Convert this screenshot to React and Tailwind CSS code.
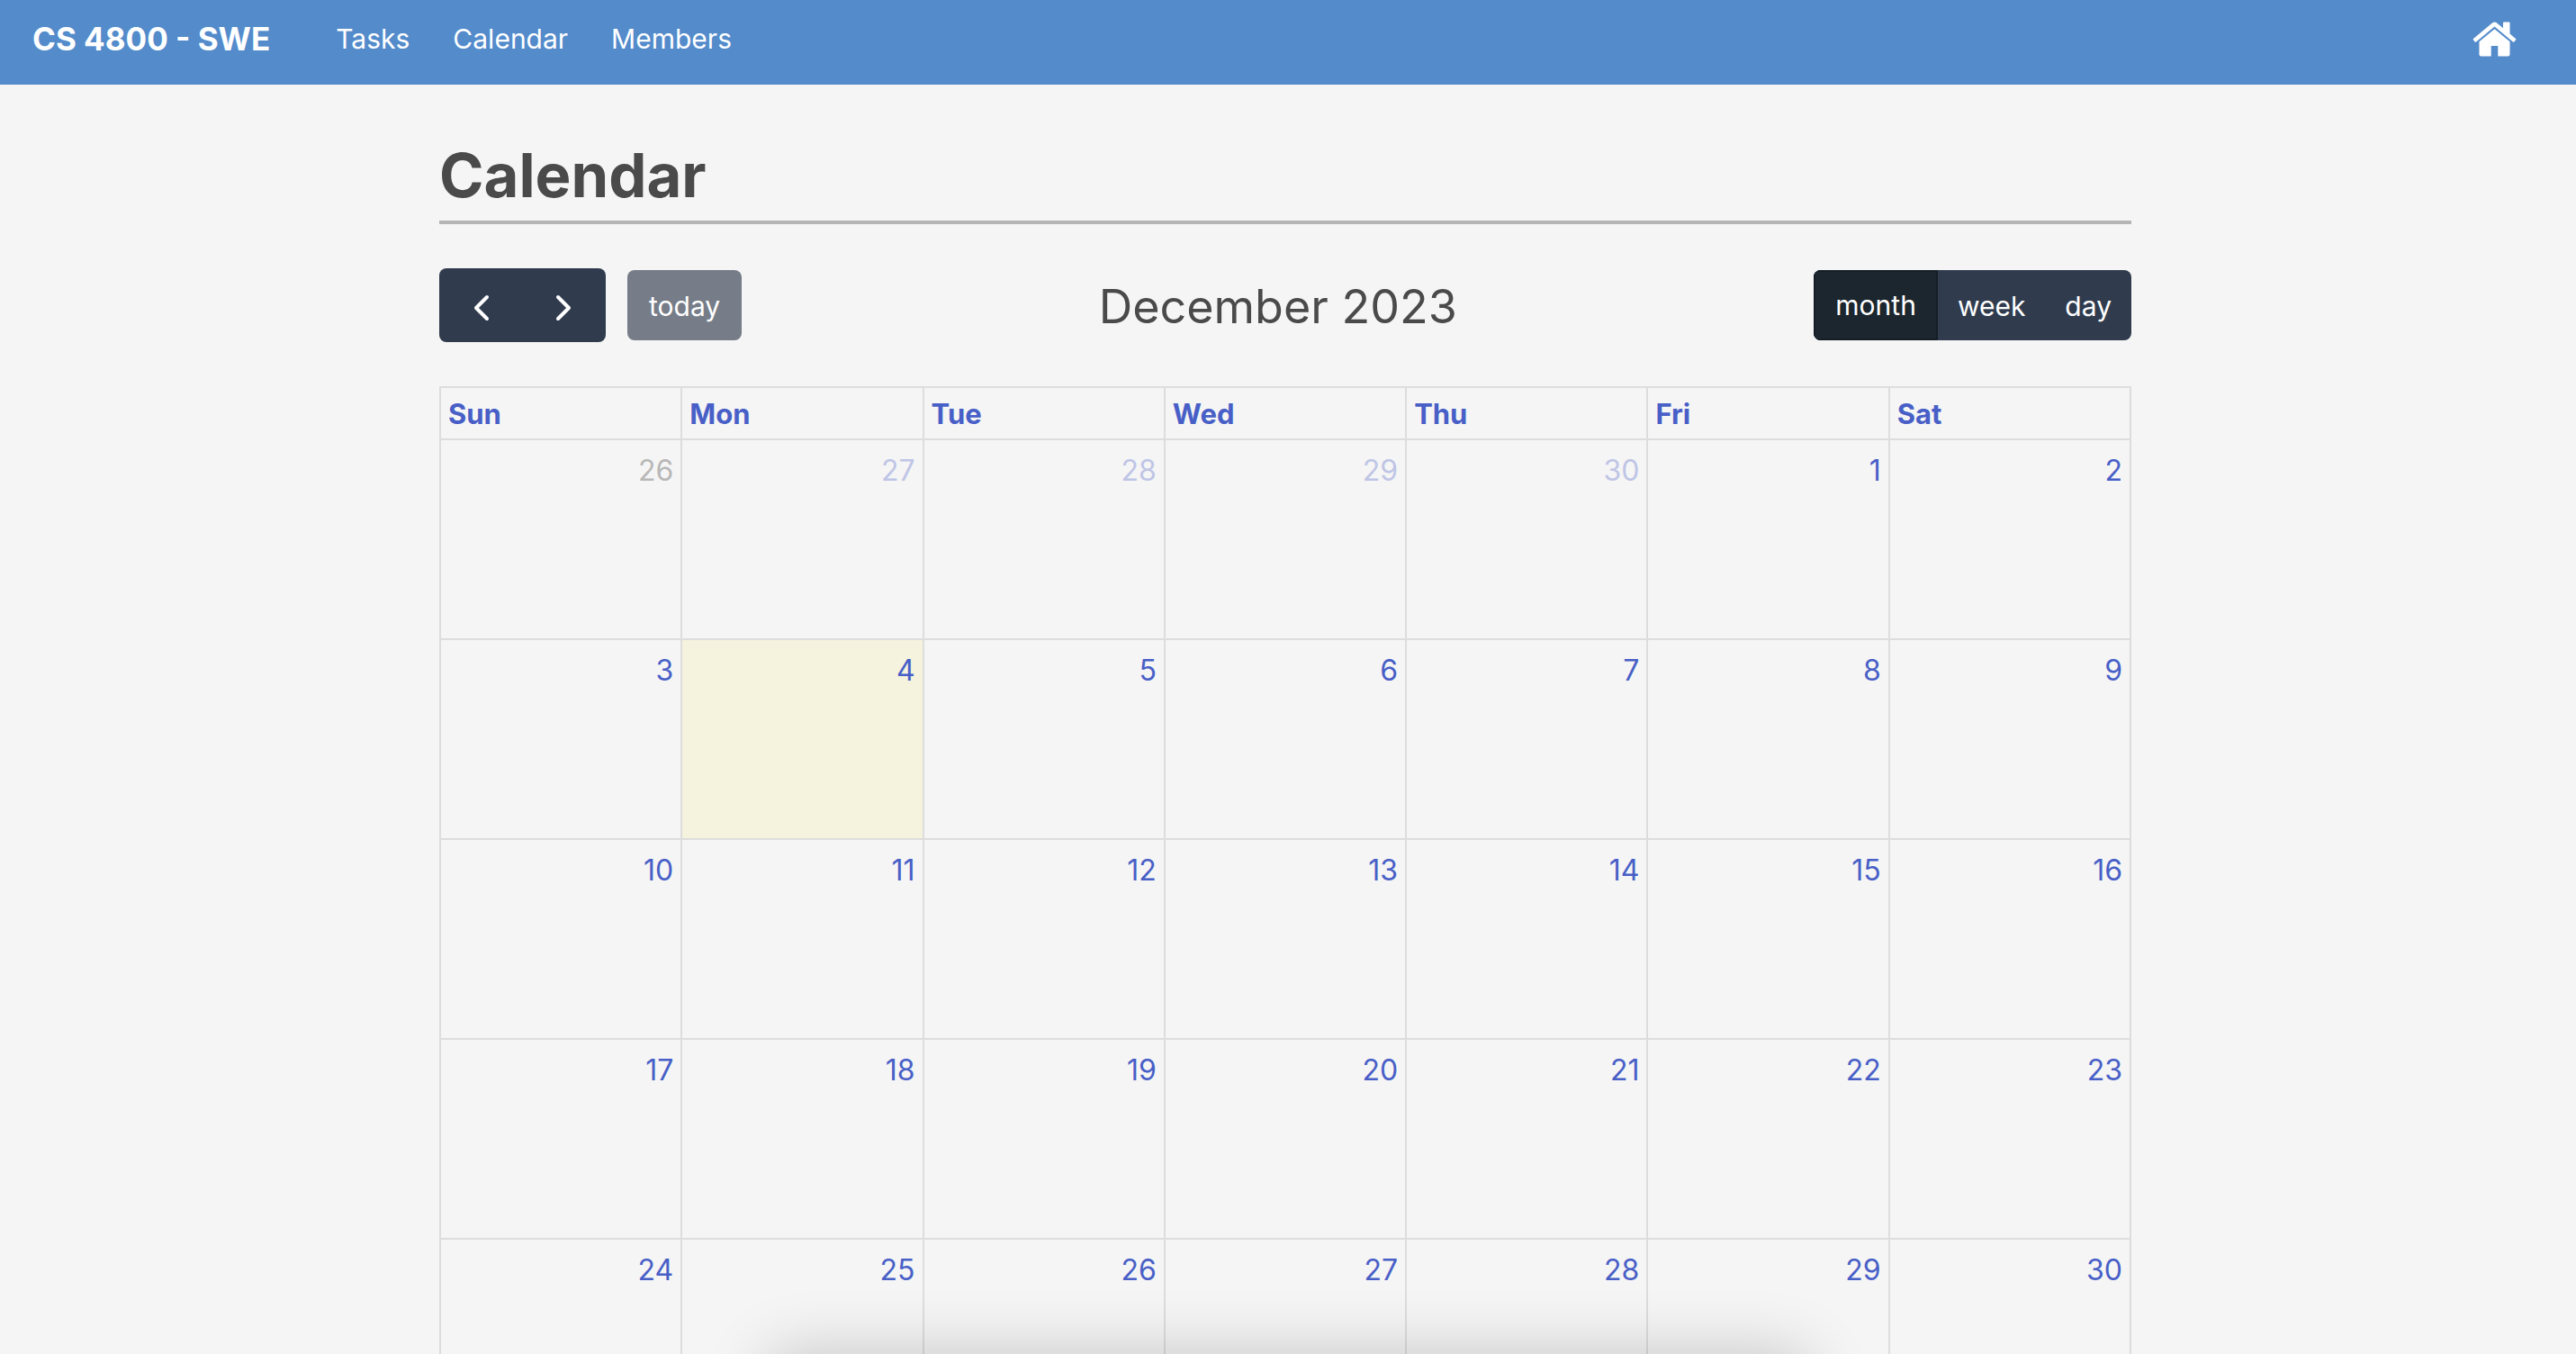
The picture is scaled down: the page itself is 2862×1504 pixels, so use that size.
import React from "react";

const DAYS = ["Sun", "Mon", "Tue", "Wed", "Thu", "Fri", "Sat"];
const WEEKS = [
  [26, 27, 28, 29, 30, 1, 2],
  [3, 4, 5, 6, 7, 8, 9],
  [10, 11, 12, 13, 14, 15, 16],
  [17, 18, 19, 20, 21, 22, 23],
  [24, 25, 26, 27, 28, 29, 30],
];

function HomeIcon() {
  return (
    <svg viewBox="0 0 1792 1792" className="size-[53px]" fill="currentColor" aria-hidden="true">
      <path d="M1472 992v480q0 26-19 45t-45 19h-384v-384h-256v384h-384q-26 0-45-19t-19-45v-480q0-1 .5-3t.5-3l575-474 575 474q1 2 1 6zm223-69l-62 74q-8 9-21 11h-3q-13 0-21-7l-692-577-692 577q-12 8-24 7-13-2-21-11l-62-74q-8-10-7-23.5t11-21.5l719-599q32-26 76-26t76 26l244 204v-195q0-14 9-23t23-9h192q14 0 23 9t9 23v408l219 182q10 8 11 21.5t-7 23.5z" />
    </svg>
  );
}

function Chevron({ d }) {
  return (
    <svg viewBox="0 0 36 36" className="size-9" fill="none" stroke="currentColor" strokeWidth="4" strokeLinecap="round" strokeLinejoin="round" aria-hidden="true">
      <path d={d} />
    </svg>
  );
}

function dayColor(week, day) {
  if (week === 0 && day === 0) return "text-[#b8b8b8]";
  if (week === 0 && day < 5) return "text-[#bfc5e6]";
  return "text-[#485fc7]";
}

export default function App() {
  return (
    <div className="h-screen overflow-hidden bg-[#f5f5f5] font-['Inter',sans-serif] text-[32px] leading-[48px] text-[#4a4a4a]">
      <nav className="flex h-[94px] items-center bg-[#538bcb] pr-16 pb-2 pl-9 text-white">
        <a href="#" className="text-[35px] leading-[50px] font-bold">CS 4800 - SWE</a>
        <div className="ml-[73px] flex gap-12 text-[30px] leading-[50px]">
          <a href="#tasks">Tasks</a>
          <a href="#calendar">Calendar</a>
          <a href="#members">Members</a>
        </div>
        <a href="#home" aria-label="Home" className="ml-auto">
          <HomeIcon />
        </a>
      </nav>

      <div className="pr-[6px]">
        <main className="mx-auto max-w-[1880px]">
          <h1 className="border-b-4 border-[#b5b5b5] pt-[61px] pb-[10px] text-[67px] leading-[80px] font-bold">Calendar</h1>

          <div className="mt-[49px] flex items-center justify-between">
            <div className="flex items-center gap-6">
              <div className="flex h-[82px] w-[185px] overflow-hidden rounded-lg bg-[#303c4e] text-white">
                <button aria-label="Previous month" className="flex flex-1 items-center justify-center">
                  <Chevron d="M25 9 13 21l12 12" />
                </button>
                <button aria-label="Next month" className="flex flex-1 items-center justify-center">
                  <Chevron d="m11 9 12 12-12 12" />
                </button>
              </div>
              <button className="h-[78px] rounded-lg bg-[#767d88] px-6 pt-0.5 text-[30px] text-white">today</button>
            </div>
            <h2 className="pt-1 text-[52px] leading-[68px]">December 2023</h2>
            <div className="flex h-[78px] overflow-hidden rounded-lg bg-[#303c4e] text-[30px] text-white">
              <button className="border-2 border-[#151e27] bg-[#1c262e] px-[22px]">month</button>
              <button className="px-[22px] pt-0.5">week</button>
              <button className="px-[22px] pt-0.5">day</button>
            </div>
          </div>

          <table className="mt-[49px] w-full table-fixed border-collapse">
            <thead>
              <tr>
                {DAYS.map((d) => (
                  <th key={d} className="h-[58px] border-2 border-[#dddddd] px-2 pt-0.5 pb-0 text-left text-[31px] font-bold text-[#485fc7]">
                    <a href="#">{d}</a>
                  </th>
                ))}
              </tr>
            </thead>
            <tbody>
              {WEEKS.map((week, w) => (
                <tr key={w}>
                  {week.map((n, d) => (
                    <td key={d} className={`h-[222px] border-2 border-[#dddddd] px-2 pt-[10px] pb-0 text-right align-top ${w === 1 && d === 1 ? "bg-[#f5f2de]" : ""}`}>
                      <a href="#" className={dayColor(w, d)}>{n}</a>
                    </td>
                  ))}
                </tr>
              ))}
            </tbody>
          </table>
        </main>
      </div>

      <div aria-hidden="true" className="pointer-events-none fixed top-full left-1/2 h-40 w-[1150px] -translate-x-1/2 rounded-3xl shadow-[0_4px_70px_6px_rgba(0,0,0,0.19)]" />
    </div>
  );
}
